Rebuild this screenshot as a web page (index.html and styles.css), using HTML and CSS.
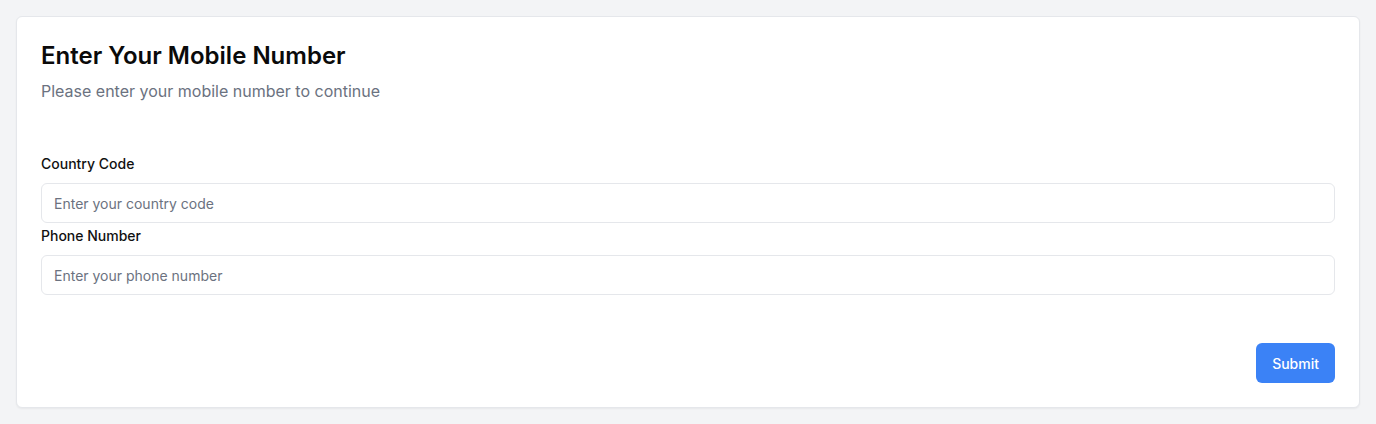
FILE: index.html
```html
<!DOCTYPE html>
<html lang="en">
<head>
<meta charset="utf-8">
<title>Enter Your Mobile Number</title>
<link rel="stylesheet" href="styles.css">
</head>
<body>
<div class="card">
  <h1 class="title">Enter Your Mobile Number</h1>
  <p class="subtitle">Please enter your mobile number to continue</p>
  <form class="form">
    <label class="label" for="cc">Country Code</label>
    <input class="input" id="cc" type="text" placeholder="Enter your country code">
    <label class="label" for="pn">Phone Number</label>
    <input class="input" id="pn" type="text" placeholder="Enter your phone number">
    <div class="actions">
      <button class="btn" type="button">Submit</button>
    </div>
  </form>
</div>
</body>
</html>
```

FILE: styles.css
```css
* { box-sizing: border-box; }
html, body { margin: 0; }
body {
  background: #f3f4f6;
  padding: 16px;
  font-family: Inter, "Noto Sans", sans-serif;
  color: #111827;
  height: 424px;
}
.card {
  background: #fff;
  border: 1px solid #e5e7eb;
  border-radius: 6px;
  box-shadow: 0 1px 2px rgba(0,0,0,0.05);
  padding: 24px;
}
.title {
  margin: 0;
  font-size: 24px;
  line-height: 30px;
  font-weight: 600;
  color: #0a0a0a;
}
.subtitle {
  margin: 8px 0 0;
  font-size: 16px;
  line-height: 24px;
  color: #6b7280;
}
.form {
  margin-top: 48px;
  display: flex;
  flex-direction: column;
}
.label {
  font-size: 14px;
  line-height: 24px;
  font-weight: 500;
  color: #111;
  margin-top: 1px;
  margin-bottom: 7px;
}
.input {
  height: 40px;
  border: 1px solid #e5e7eb;
  border-radius: 6px;
  padding: 0 12px;
  font-family: inherit;
  font-size: 14px;
  color: #111827;
  background: #fff;
  outline: none;
}
.input::placeholder { color: #6b7280; }
.actions {
  margin-top: 48px;
  display: flex;
  justify-content: flex-end;
}
.btn {
  height: 40px;
  padding: 0 16px;
  border: none;
  border-radius: 6px;
  background: #3b82f6;
  color: #fff;
  font-family: inherit;
  font-size: 14px;
  font-weight: 500;
  cursor: pointer;
}
```
